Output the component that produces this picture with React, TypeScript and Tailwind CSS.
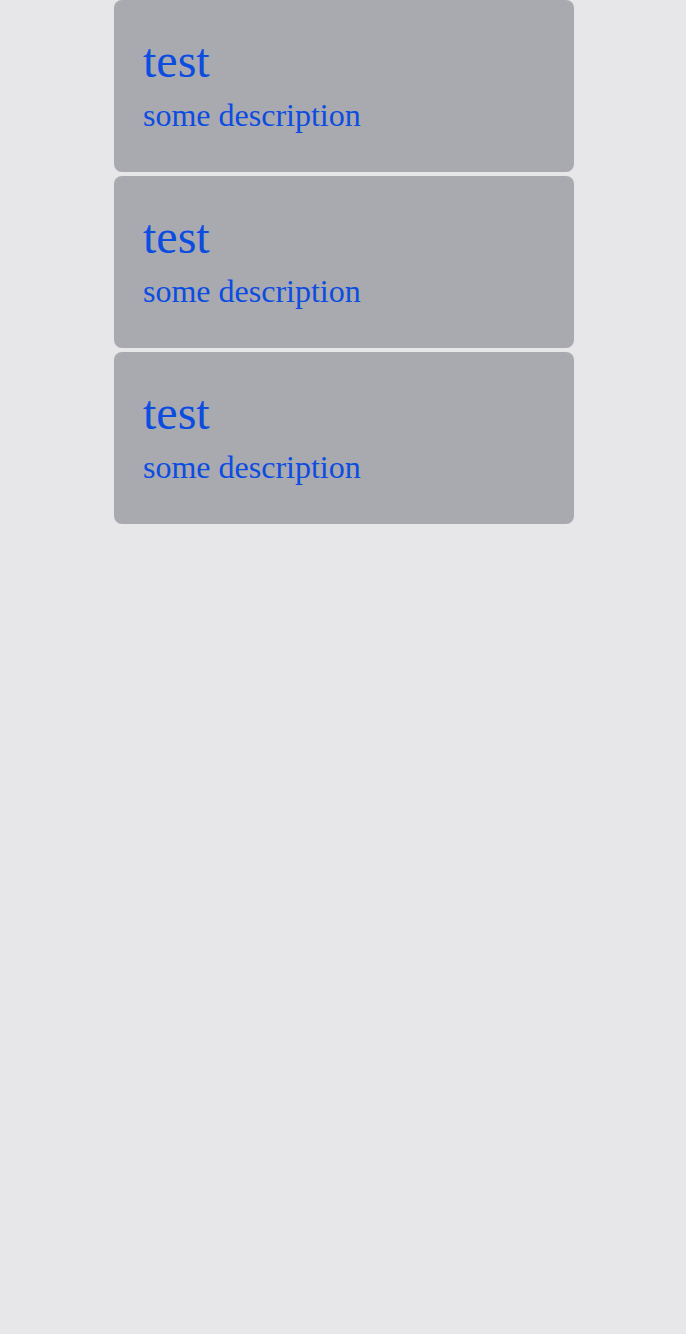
import React from "react";

const items = [
  { title: "test", desc: "some description" },
  { title: "test", desc: "some description" },
  { title: "test", desc: "some description" },
];

export default function App() {
  return (
    <div
      className="min-h-[1334px] w-full bg-[#e7e7e9] pl-[2px]"
      style={{ fontFamily: '"Liberation Serif", "Times New Roman", serif' }}
    >
      <div className="mx-auto flex w-[460px] flex-col gap-1">
        {items.map((it, i) => (
          <div key={i} className="rounded-lg bg-[#a9a9b0] pl-[29px] pr-7 py-8">
            <div className="text-[48px] leading-[58px] text-[#0b4de0]">{it.title}</div>
            <div className="text-[32px] leading-[50px] text-[#0b4de0]">{it.desc}</div>
          </div>
        ))}
      </div>
    </div>
  );
}
